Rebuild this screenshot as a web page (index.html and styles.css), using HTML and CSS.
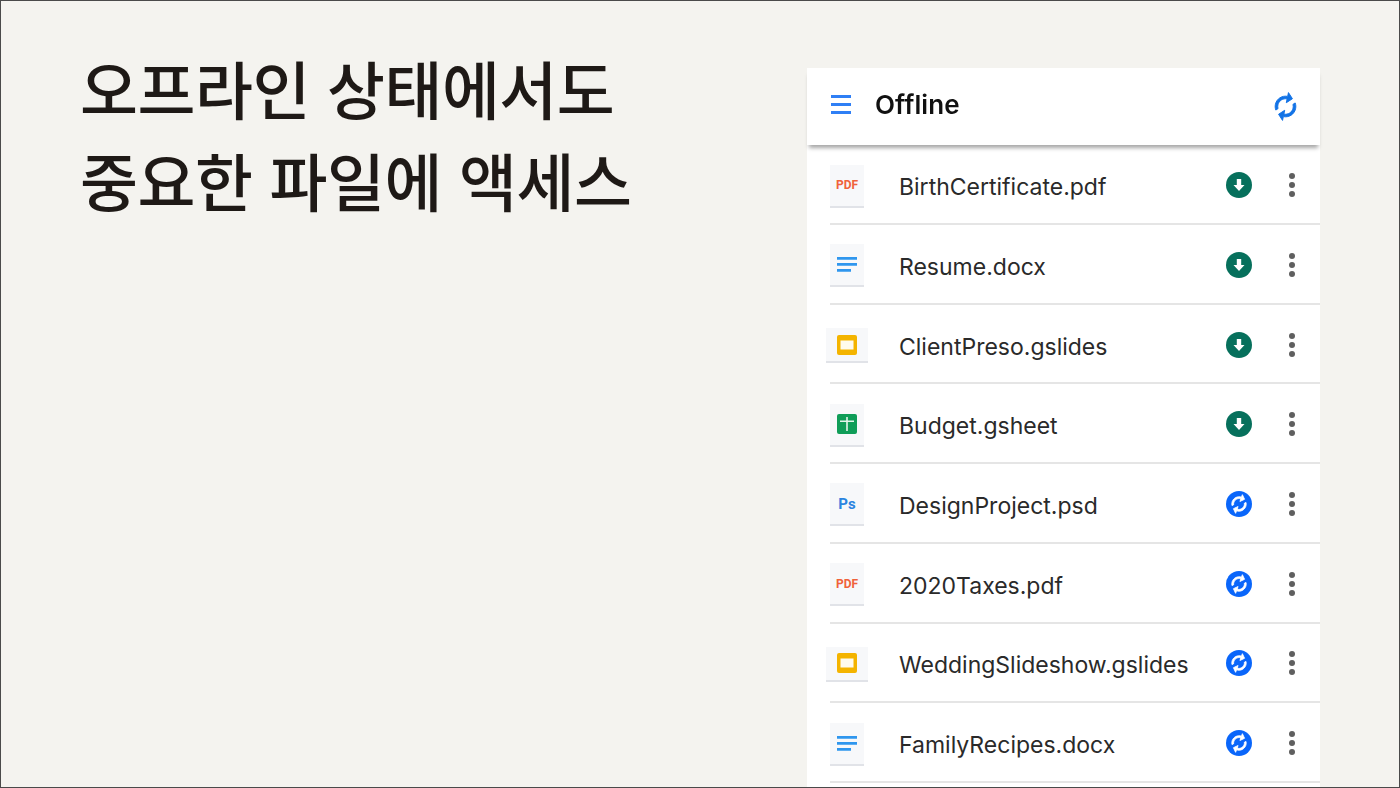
FILE: index.html
```html
<!DOCTYPE html>
<html lang="ko">
<head>
  <meta charset="utf-8">
  <title>오프라인 상태에서도 중요한 파일에 액세스</title>
  <link rel="stylesheet" href="styles.css">
</head>
<body>
  <svg class="defs" width="0" height="0">
    <symbol id="sync" viewBox="0 0 24 24">
      <g transform="rotate(12 12 12) translate(24 0) scale(-1 1)">
        <path stroke-width=".7" d="M12 4V1L8 5l4 4V6c3.31 0 6 2.69 6 6 0 1.01-.25 1.97-.7 2.8l1.46 1.46C19.54 15.03 20 13.57 20 12c0-4.42-3.58-8-8-8zm0 14c-3.31 0-6-2.69-6-6 0-1.01.25-1.97.7-2.8L5.24 7.74C4.46 8.97 4 10.43 4 12c0 4.42 3.58 8 8 8v3l4-4-4-4v3z"/>
      </g>
    </symbol>
    <symbol id="saved" viewBox="0 0 26 26">
      <circle cx="13" cy="13" r="13" fill="#07705c"/>
      <path d="M10.800 7h4.400v6h3.300L13 19l-5.500-6h3.300z" fill="#fff"/>
    </symbol>
    <symbol id="syncing" viewBox="0 0 26 26">
      <circle cx="13" cy="13" r="13" fill="#0a66fa"/>
      <g transform="translate(2.200 2.200) scale(.9) rotate(20 12 12) translate(24 0) scale(-1 1)" fill="#fff" stroke="#fff" stroke-width=".9">
        <path d="M12 4V1L8 5l4 4V6c3.31 0 6 2.69 6 6 0 1.01-.25 1.97-.7 2.8l1.46 1.46C19.54 15.03 20 13.57 20 12c0-4.42-3.58-8-8-8zm0 14c-3.31 0-6-2.69-6-6 0-1.01.25-1.97.7-2.8L5.24 7.74C4.46 8.97 4 10.43 4 12c0 4.42 3.58 8 8 8v3l4-4-4-4v3z"/>
      </g>
    </symbol>
    <symbol id="more" viewBox="0 0 8 26">
      <circle cx="4" cy="4" r="3" fill="#5f5f5f"/>
      <circle cx="4" cy="13" r="3" fill="#5f5f5f"/>
      <circle cx="4" cy="22" r="3" fill="#5f5f5f"/>
    </symbol>
    <symbol id="doc" viewBox="0 0 20 15">
      <path d="M0 0h20v2.800H0zM0 6h20v2.800H0zM0 12h14v2.800H0z" fill="#2f96ee"/>
    </symbol>
    <symbol id="slides" viewBox="0 0 20 20">
      <rect width="20" height="20" rx="2" fill="#f4b400"/>
      <rect x="3.500" y="5.500" width="13" height="9" fill="#fffbee"/>
    </symbol>
    <symbol id="sheet" viewBox="0 0 20 20">
      <rect width="20" height="20" rx="2" fill="#0f9d58"/>
      <path d="M3 6.500h6.200V3h1.600v3.500H17v1.600h-6.200V17H9.200V8.100H3z" fill="#e4f4ea"/>
    </symbol>
  </svg>

  <main class="slide">
    <h1 class="title">오프라인 상태에서도<br>중요한 파일에 액세스</h1>

    <section class="phone">
      <header class="topbar">
        <div class="burger"><span></span><span></span><span></span></div>
        <div class="topbar-title">Offline</div>
        <svg class="topbar-sync"><use href="#sync"/></svg>
      </header>

      <div class="row">
        <div class="tile tile-text pdf">PDF</div>
        <div class="name">BirthCertificate.pdf</div>
        <svg class="status"><use href="#saved"/></svg>
        <svg class="more"><use href="#more"/></svg>
      </div>
      <div class="row">
        <div class="tile"><svg class="ic-doc"><use href="#doc"/></svg></div>
        <div class="name">Resume.docx</div>
        <svg class="status"><use href="#saved"/></svg>
        <svg class="more"><use href="#more"/></svg>
      </div>
      <div class="row">
        <div class="tile tile-wide"><svg class="ic-square"><use href="#slides"/></svg></div>
        <div class="name">ClientPreso.gslides</div>
        <svg class="status"><use href="#saved"/></svg>
        <svg class="more"><use href="#more"/></svg>
      </div>
      <div class="row">
        <div class="tile"><svg class="ic-square"><use href="#sheet"/></svg></div>
        <div class="name">Budget.gsheet</div>
        <svg class="status"><use href="#saved"/></svg>
        <svg class="more"><use href="#more"/></svg>
      </div>
      <div class="row">
        <div class="tile tile-text ps">Ps</div>
        <div class="name">DesignProject.psd</div>
        <svg class="status"><use href="#syncing"/></svg>
        <svg class="more"><use href="#more"/></svg>
      </div>
      <div class="row">
        <div class="tile tile-text pdf">PDF</div>
        <div class="name">2020Taxes.pdf</div>
        <svg class="status"><use href="#syncing"/></svg>
        <svg class="more"><use href="#more"/></svg>
      </div>
      <div class="row">
        <div class="tile tile-wide"><svg class="ic-square"><use href="#slides"/></svg></div>
        <div class="name">WeddingSlideshow.gslides</div>
        <svg class="status"><use href="#syncing"/></svg>
        <svg class="more"><use href="#more"/></svg>
      </div>
      <div class="row">
        <div class="tile"><svg class="ic-doc"><use href="#doc"/></svg></div>
        <div class="name">FamilyRecipes.docx</div>
        <svg class="status"><use href="#syncing"/></svg>
        <svg class="more"><use href="#more"/></svg>
      </div>
    </section>
  </main>
</body>
</html>
```

FILE: styles.css
```css
body {
  margin: 0;
  font-family: "Inter", "Noto Sans CJK KR", sans-serif;
}

.defs {
  display: block;
  height: 0;
}

.slide {
  box-sizing: border-box;
  width: 1400px;
  height: 788px;
  border: 1px solid #4a4a4a;
  background: #f4f3ef;
  display: flex;
  justify-content: space-between;
  overflow: hidden;
}

.title {
  margin: 40px 0 0 79px;
  font-family: "Noto Sans CJK KR", sans-serif;
  font-size: 63px;
  font-weight: 500;
  line-height: 92px;
  letter-spacing: -0.5px;
  color: #1e1916;
}

.phone {
  width: 513px;
  margin: 67px 79px 0 0;
  background: #fff;
  filter: blur(0.4px);
}

.topbar {
  height: 77.4px;
  display: flex;
  align-items: center;
  padding: 0 19px 0 24px;
  box-shadow: 0 5px 4px -2px rgba(0, 0, 0, 0.35);
  position: relative;
}

.burger {
  width: 20px;
  margin-bottom: 4px;
  display: flex;
  flex-direction: column;
  gap: 5.5px;
}

.burger span {
  height: 2.5px;
  background: #2f7ff5;
}

.topbar-title {
  margin-left: 24px;
  margin-bottom: 4px;
  font-size: 26px;
  font-weight: 600;
  letter-spacing: 0.1px;
  color: #111;
  flex: 1;
}

.topbar-sync {
  width: 31px;
  height: 31px;
  fill: #1273e6;
  stroke: #1273e6;
  stroke-width: 0.6;
}

.row {
  box-sizing: border-box;
  height: 79.7px;
  margin-left: 23px;
  padding-top: 2px;
  border-bottom: 2px solid #e5e5e5;
  display: flex;
  align-items: center;
}

.tile {
  box-sizing: border-box;
  width: 34px;
  height: 43px;
  flex: none;
  margin-top: 2px;
  margin-right: 35px;
  background: #f7f8fa;
  border-bottom: 2px solid #e1e3e8;
  display: flex;
  align-items: center;
  justify-content: center;
}

.tile-wide {
  width: 42px;
  height: 35px;
  margin-left: -4px;
  margin-right: 31px;
}

.tile-text {
  font-family: "Roboto", sans-serif;
  font-weight: 700;
}

.pdf {
  font-size: 12px;
  color: #f0623a;
}

.ps {
  font-size: 15px;
  color: #2b84e0;
}

.ic-doc {
  width: 20px;
  height: 15px;
}

.ic-square {
  width: 20px;
  height: 20px;
}

.name {
  flex: 1;
  margin-top: 4px;
  font-size: 23px;
  color: #2a2a2a;
}

.status {
  width: 26px;
  height: 26px;
  flex: none;
  margin-right: 36px;
}

.more {
  width: 8px;
  height: 26px;
  flex: none;
  margin-right: 24px;
}
```
